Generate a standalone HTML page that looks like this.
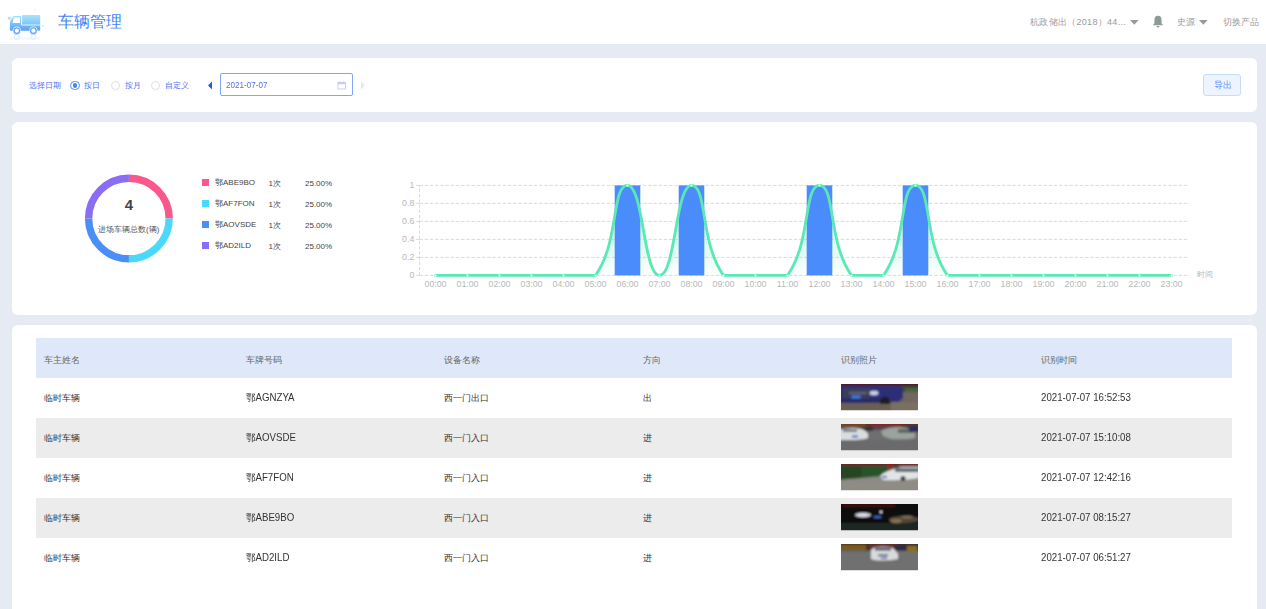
<!DOCTYPE html>
<html><head><meta charset="utf-8">
<style>
*{margin:0;padding:0;box-sizing:border-box}
html,body{width:1266px;height:609px;overflow:hidden;background:#e6ebf3;font-family:"Liberation Sans",sans-serif}
.abs{position:absolute}
#top{position:absolute;left:0;top:0;width:1266px;height:44px;background:#fff}
.card{position:absolute;left:12px;width:1245px;background:#fff;border-radius:6px}
#c1{top:58px;height:54px}
#c2{top:122px;height:193px}
#c3{top:325px;height:300px}
.t{position:absolute;white-space:nowrap;line-height:1}
.th{font-size:9.2px;color:#666}
.td{font-size:9.2px;color:#333}
.tn{font-size:10.2px;color:#333;transform:scaleX(0.95);transform-origin:0 0}
</style></head><body>
<div id="top">
  <svg class="abs" style="left:0;top:0" width="50" height="44" viewBox="0 0 50 44">
  <defs>
   <linearGradient id="tg" x1="0" y1="0" x2="0" y2="1"><stop offset="0" stop-color="#a6e3fb"/><stop offset="1" stop-color="#58a0f6"/></linearGradient>
   <linearGradient id="tg2" x1="0" y1="0" x2="0" y2="1"><stop offset="0" stop-color="#a9e4fb"/><stop offset="1" stop-color="#7cc3f8"/></linearGradient>
   <linearGradient id="rf" x1="0" y1="0" x2="0" y2="1"><stop offset="0" stop-color="#cfe3fb"/><stop offset="1" stop-color="#ffffff"/></linearGradient>
  </defs>
  <rect x="22.1" y="15" width="18.1" height="9.8" rx="0.6" fill="url(#tg2)"/>
  <path d="M14.5 16 H21.2 V24.7 H40.2 V29.6 Q40.2 30.8 39 30.8 H11 Q9.9 30.8 9.9 29.6 V22.5 Q10.2 20.5 12 18 Q13.2 16 14.5 16Z" fill="url(#tg)"/>
  <path d="M21.6 15.6 V25.1 H40.2" fill="none" stroke="#eaf6fe" stroke-width="0.8"/>
  <path d="M14.2 17.6 H19.9 V22.9 H12.6 Q12.9 20 14.2 17.6Z" fill="#fff"/>
  <circle cx="16.8" cy="30.7" r="3.9" fill="#5fa3f6" stroke="#fff" stroke-width="0.7"/><circle cx="16.8" cy="30.7" r="2.1" fill="#fff"/>
  <circle cx="33.4" cy="30.7" r="3.9" fill="#5fa3f6" stroke="#fff" stroke-width="0.7"/><circle cx="33.4" cy="30.7" r="2.1" fill="#fff"/>
  <g opacity="0.35"><rect x="10" y="37.5" width="30" height="3.5" fill="url(#rf)"/><circle cx="16.8" cy="37" r="2.5" fill="none" stroke="#9cc6f7" stroke-width="1"/><circle cx="33.4" cy="37" r="2.5" fill="none" stroke="#9cc6f7" stroke-width="1"/></g>
  <circle cx="9.3" cy="18.2" r="1.6" fill="#b9dcfa"/>
  <circle cx="35.2" cy="9.8" r="0.6" fill="#b9dcfa"/>
  <circle cx="42.9" cy="25.9" r="0.8" fill="#b9dcfa"/>
</svg>
  <div class="t" style="left:58px;top:14px;font-size:15.5px;color:#3f85f2">车辆管理</div>
  <div class="t" style="left:1030px;top:18px;font-size:9px;color:#999;letter-spacing:0.3px">杭政储出（2018）44...</div>
  <div class="t" style="left:1177px;top:18px;font-size:9px;color:#999">史源</div>
  <svg class="abs" style="left:1129.5px;top:19.5px" width="9" height="5"><path d="M0 0H8.6L4.3 4.8Z" fill="#999"/></svg>
  <svg class="abs" style="left:1152px;top:15px" width="12" height="13" viewBox="0 0 12 13"><path d="M6 0.8 C8.5 0.8 9.6 2.8 9.6 5.2 V8.4 L11.2 10.3 H0.8 L2.4 8.4 V5.2 C2.4 2.8 3.5 0.8 6 0.8Z" fill="#8e9a96"/><path d="M4.4 11 H7.6 Q7.2 12.6 6 12.6 Q4.8 12.6 4.4 11Z" fill="#8e9a96"/></svg>
  <svg class="abs" style="left:1198.5px;top:19.5px" width="9" height="5"><path d="M0 0H8.6L4.3 4.8Z" fill="#999"/></svg>
  <div class="t" style="left:1223px;top:18px;font-size:9px;color:#999">切换产品</div>
</div>
<div class="card" id="c1">
  <div class="t" style="left:17px;top:24px;font-size:8px;color:#4d72f3">选择日期</div>
  <div class="abs" style="left:58px;top:22.5px;width:9.5px;height:9.5px;border-radius:50%;border:1px solid #4e8df5"><div class="abs" style="left:1.5px;top:1.5px;width:4.5px;height:4.5px;border-radius:50%;background:#3d86f3"></div></div>
  <div class="t" style="left:72px;top:24px;font-size:8px;color:#4d72f3">按日</div>
  <div class="abs" style="left:98.7px;top:22.5px;width:9.5px;height:9.5px;border-radius:50%;border:1px solid #dcdfe6"></div>
  <div class="t" style="left:112.5px;top:24px;font-size:8px;color:#4d72f3">按月</div>
  <div class="abs" style="left:138.8px;top:22.5px;width:9.5px;height:9.5px;border-radius:50%;border:1px solid #dcdfe6"></div>
  <div class="t" style="left:153px;top:24px;font-size:8px;color:#4d72f3">自定义</div>
  <svg class="abs" style="left:195px;top:23px" width="6" height="9"><path d="M5 0.5 L1 4.5 L5 8.5Z" fill="#1a5cf0"/></svg>
  <div class="abs" style="left:208px;top:15.2px;width:133px;height:23px;border:1.2px solid #80a6f8;border-radius:2px"></div>
  <div class="t" style="left:213.5px;top:22.8px;font-size:9.3px;color:#4d72f3;transform:scaleX(0.87);transform-origin:0 0">2021-07-07</div>
  <svg class="abs" style="left:325px;top:22.5px" width="10" height="10"><rect x="0.9" y="1.4" width="7.6" height="6.6" fill="none" stroke="#c5c8f3" stroke-width="0.9"/><line x1="0.9" y1="2.6" x2="8.5" y2="2.6" stroke="#c5c8f3" stroke-width="1.3"/><line x1="3" y1="0.4" x2="3" y2="1.8" stroke="#c5c8f3" stroke-width="0.9"/><line x1="6.5" y1="0.4" x2="6.5" y2="1.8" stroke="#c5c8f3" stroke-width="0.9"/></svg>
  <svg class="abs" style="left:348px;top:23px" width="6" height="9"><path d="M1 0.5 L5 4.5 L1 8.5Z" fill="#e8e8e8"/></svg>
  <div class="abs" style="left:1191px;top:16px;width:38px;height:22px;border:1px solid #c6dcfb;background:#edf4ff;border-radius:3px"></div>
  <div class="t" style="left:1202px;top:23px;font-size:8.5px;color:#5b8ff5">导出</div>
</div>
<div class="card" id="c2"></div>
<svg class="abs" style="left:0;top:0" width="400" height="320"><path d="M128.90 178.20 A40.3 40.3 0 0 1 169.20 218.50" fill="none" stroke="#fa588c" stroke-width="7.4"/><path d="M169.20 218.50 A40.3 40.3 0 0 1 128.90 258.80" fill="none" stroke="#48d9fc" stroke-width="7.4"/><path d="M128.90 258.80 A40.3 40.3 0 0 1 88.60 218.50" fill="none" stroke="#4a8ef7" stroke-width="7.4"/><path d="M88.60 218.50 A40.3 40.3 0 0 1 128.90 178.20" fill="none" stroke="#8a6cf5" stroke-width="7.4"/></svg>
<div class="t" style="left:118.9px;top:197px;width:20px;text-align:center;font-size:15px;font-weight:bold;color:#454545">4</div>
<div class="t" style="left:98px;top:226px;font-size:8px;color:#555">进场车辆总数(辆)</div>
<div class="abs" style="left:201.7px;top:179.0px;width:7px;height:7px;background:#fa588c"></div><div class="t" style="left:215px;top:179.0px;font-size:8px;color:#444">鄂ABE9BO</div><div class="t" style="left:268.5px;top:180.0px;font-size:8px;color:#444">1次</div><div class="t" style="left:305px;top:180.0px;font-size:8px;color:#444">25.00%</div>
<div class="abs" style="left:201.7px;top:200.1px;width:7px;height:7px;background:#48d9fc"></div><div class="t" style="left:215px;top:200.1px;font-size:8px;color:#444">鄂AF7FON</div><div class="t" style="left:268.5px;top:201.1px;font-size:8px;color:#444">1次</div><div class="t" style="left:305px;top:201.1px;font-size:8px;color:#444">25.00%</div>
<div class="abs" style="left:201.7px;top:221.2px;width:7px;height:7px;background:#4a8ef7"></div><div class="t" style="left:215px;top:221.2px;font-size:8px;color:#444">鄂AOVSDE</div><div class="t" style="left:268.5px;top:222.2px;font-size:8px;color:#444">1次</div><div class="t" style="left:305px;top:222.2px;font-size:8px;color:#444">25.00%</div>
<div class="abs" style="left:201.7px;top:242.3px;width:7px;height:7px;background:#8a6cf5"></div><div class="t" style="left:215px;top:242.3px;font-size:8px;color:#444">鄂AD2ILD</div><div class="t" style="left:268.5px;top:243.3px;font-size:8px;color:#444">1次</div><div class="t" style="left:305px;top:243.3px;font-size:8px;color:#444">25.00%</div>
<svg class="abs" style="left:0;top:122px;font-family:'Liberation Sans',sans-serif" width="1266" height="320" viewBox="0 122 1266 320">
<defs><linearGradient id="ag" x1="0" y1="0" x2="0" y2="1"><stop offset="0" stop-color="#5fe8b8" stop-opacity="0.6"/><stop offset="1" stop-color="#5fe8b8" stop-opacity="0.02"/></linearGradient></defs>
<line x1="419.5" y1="257.40" x2="1187.7" y2="257.40" stroke="#d6d6d6" stroke-width="0.9" stroke-dasharray="3.4 1.8"/>
<line x1="419.5" y1="239.40" x2="1187.7" y2="239.40" stroke="#d6d6d6" stroke-width="0.9" stroke-dasharray="3.4 1.8"/>
<line x1="419.5" y1="221.40" x2="1187.7" y2="221.40" stroke="#d6d6d6" stroke-width="0.9" stroke-dasharray="3.4 1.8"/>
<line x1="419.5" y1="203.40" x2="1187.7" y2="203.40" stroke="#d6d6d6" stroke-width="0.9" stroke-dasharray="3.4 1.8"/>
<line x1="419.5" y1="185.40" x2="1187.7" y2="185.40" stroke="#d6d6d6" stroke-width="0.9" stroke-dasharray="3.4 1.8"/>
<line x1="419.5" y1="275.4" x2="1187.7" y2="275.4" stroke="#d6d6d6" stroke-width="0.9" stroke-dasharray="3.4 1.8"/>
<line x1="419.5" y1="275.4" x2="419.5" y2="185.4" stroke="#d6d6d6" stroke-width="0.9" stroke-dasharray="3.4 1.8"/>
<line x1="416.0" y1="275.40" x2="419.5" y2="275.40" stroke="#d6d6d6" stroke-width="0.9"/>
<text x="414.3" y="278.30" text-anchor="end" font-size="8.8" fill="#b8b8b8">0</text>
<line x1="416.0" y1="257.40" x2="419.5" y2="257.40" stroke="#d6d6d6" stroke-width="0.9"/>
<text x="414.3" y="260.30" text-anchor="end" font-size="8.8" fill="#b8b8b8">0.2</text>
<line x1="416.0" y1="239.40" x2="419.5" y2="239.40" stroke="#d6d6d6" stroke-width="0.9"/>
<text x="414.3" y="242.30" text-anchor="end" font-size="8.8" fill="#b8b8b8">0.4</text>
<line x1="416.0" y1="221.40" x2="419.5" y2="221.40" stroke="#d6d6d6" stroke-width="0.9"/>
<text x="414.3" y="224.30" text-anchor="end" font-size="8.8" fill="#b8b8b8">0.6</text>
<line x1="416.0" y1="203.40" x2="419.5" y2="203.40" stroke="#d6d6d6" stroke-width="0.9"/>
<text x="414.3" y="206.30" text-anchor="end" font-size="8.8" fill="#b8b8b8">0.8</text>
<line x1="416.0" y1="185.40" x2="419.5" y2="185.40" stroke="#d6d6d6" stroke-width="0.9"/>
<text x="414.3" y="188.30" text-anchor="end" font-size="8.8" fill="#b8b8b8">1</text>
<path d="M435.50 275.40 C435.50 275.40 451.50 275.40 467.50 275.40 C483.50 275.40 483.50 275.40 499.50 275.40 C515.50 275.40 515.50 275.40 531.50 275.40 C547.50 275.40 547.50 275.40 563.50 275.40 C579.50 275.40 587.47 275.40 595.50 275.40 C619.47 241.69 611.50 185.40 627.50 185.40 C643.50 185.40 643.50 275.40 659.50 275.40 C675.50 275.40 675.50 185.40 691.50 185.40 C707.50 185.40 699.53 241.69 723.50 275.40 C731.53 275.40 739.50 275.40 755.50 275.40 C771.50 275.40 779.47 275.40 787.50 275.40 C811.47 241.69 803.50 185.40 819.50 185.40 C835.50 185.40 827.53 241.69 851.50 275.40 C859.53 275.40 875.47 275.40 883.50 275.40 C907.47 241.69 899.50 185.40 915.50 185.40 C931.50 185.40 923.53 241.69 947.50 275.40 C955.53 275.40 963.50 275.40 979.50 275.40 C995.50 275.40 995.50 275.40 1011.50 275.40 C1027.50 275.40 1027.50 275.40 1043.50 275.40 C1059.50 275.40 1059.50 275.40 1075.50 275.40 C1091.50 275.40 1091.50 275.40 1107.50 275.40 C1123.50 275.40 1123.50 275.40 1139.50 275.40 C1155.50 275.40 1171.50 275.40 1171.50 275.40 L1171.50 275.4 L435.50 275.4 Z" fill="url(#ag)"/>
<rect x="614.70" y="185.4" width="25.6" height="90.00" fill="#4a8cfc"/>
<rect x="678.70" y="185.4" width="25.6" height="90.00" fill="#4a8cfc"/>
<rect x="806.70" y="185.4" width="25.6" height="90.00" fill="#4a8cfc"/>
<rect x="902.70" y="185.4" width="25.6" height="90.00" fill="#4a8cfc"/>
<path d="M435.50 275.40 C435.50 275.40 451.50 275.40 467.50 275.40 C483.50 275.40 483.50 275.40 499.50 275.40 C515.50 275.40 515.50 275.40 531.50 275.40 C547.50 275.40 547.50 275.40 563.50 275.40 C579.50 275.40 587.47 275.40 595.50 275.40 C619.47 241.69 611.50 185.40 627.50 185.40 C643.50 185.40 643.50 275.40 659.50 275.40 C675.50 275.40 675.50 185.40 691.50 185.40 C707.50 185.40 699.53 241.69 723.50 275.40 C731.53 275.40 739.50 275.40 755.50 275.40 C771.50 275.40 779.47 275.40 787.50 275.40 C811.47 241.69 803.50 185.40 819.50 185.40 C835.50 185.40 827.53 241.69 851.50 275.40 C859.53 275.40 875.47 275.40 883.50 275.40 C907.47 241.69 899.50 185.40 915.50 185.40 C931.50 185.40 923.53 241.69 947.50 275.40 C955.53 275.40 963.50 275.40 979.50 275.40 C995.50 275.40 995.50 275.40 1011.50 275.40 C1027.50 275.40 1027.50 275.40 1043.50 275.40 C1059.50 275.40 1059.50 275.40 1075.50 275.40 C1091.50 275.40 1091.50 275.40 1107.50 275.40 C1123.50 275.40 1123.50 275.40 1139.50 275.40 C1155.50 275.40 1171.50 275.40 1171.50 275.40" fill="none" stroke="#58e9b5" stroke-width="2.8" stroke-linejoin="round" stroke-linecap="round"/>
<circle cx="435.50" cy="275.40" r="1" fill="#fff"/>
<circle cx="467.50" cy="275.40" r="1" fill="#fff"/>
<circle cx="499.50" cy="275.40" r="1" fill="#fff"/>
<circle cx="531.50" cy="275.40" r="1" fill="#fff"/>
<circle cx="563.50" cy="275.40" r="1" fill="#fff"/>
<circle cx="595.50" cy="275.40" r="1" fill="#fff"/>
<circle cx="627.50" cy="185.40" r="1" fill="#fff"/>
<circle cx="659.50" cy="275.40" r="1" fill="#fff"/>
<circle cx="691.50" cy="185.40" r="1" fill="#fff"/>
<circle cx="723.50" cy="275.40" r="1" fill="#fff"/>
<circle cx="755.50" cy="275.40" r="1" fill="#fff"/>
<circle cx="787.50" cy="275.40" r="1" fill="#fff"/>
<circle cx="819.50" cy="185.40" r="1" fill="#fff"/>
<circle cx="851.50" cy="275.40" r="1" fill="#fff"/>
<circle cx="883.50" cy="275.40" r="1" fill="#fff"/>
<circle cx="915.50" cy="185.40" r="1" fill="#fff"/>
<circle cx="947.50" cy="275.40" r="1" fill="#fff"/>
<circle cx="979.50" cy="275.40" r="1" fill="#fff"/>
<circle cx="1011.50" cy="275.40" r="1" fill="#fff"/>
<circle cx="1043.50" cy="275.40" r="1" fill="#fff"/>
<circle cx="1075.50" cy="275.40" r="1" fill="#fff"/>
<circle cx="1107.50" cy="275.40" r="1" fill="#fff"/>
<circle cx="1139.50" cy="275.40" r="1" fill="#fff"/>
<circle cx="1171.50" cy="275.40" r="1" fill="#fff"/>
<text x="435.50" y="287" text-anchor="middle" font-size="8.8" fill="#b8b8b8">00:00</text>
<text x="467.50" y="287" text-anchor="middle" font-size="8.8" fill="#b8b8b8">01:00</text>
<text x="499.50" y="287" text-anchor="middle" font-size="8.8" fill="#b8b8b8">02:00</text>
<text x="531.50" y="287" text-anchor="middle" font-size="8.8" fill="#b8b8b8">03:00</text>
<text x="563.50" y="287" text-anchor="middle" font-size="8.8" fill="#b8b8b8">04:00</text>
<text x="595.50" y="287" text-anchor="middle" font-size="8.8" fill="#b8b8b8">05:00</text>
<text x="627.50" y="287" text-anchor="middle" font-size="8.8" fill="#b8b8b8">06:00</text>
<text x="659.50" y="287" text-anchor="middle" font-size="8.8" fill="#b8b8b8">07:00</text>
<text x="691.50" y="287" text-anchor="middle" font-size="8.8" fill="#b8b8b8">08:00</text>
<text x="723.50" y="287" text-anchor="middle" font-size="8.8" fill="#b8b8b8">09:00</text>
<text x="755.50" y="287" text-anchor="middle" font-size="8.8" fill="#b8b8b8">10:00</text>
<text x="787.50" y="287" text-anchor="middle" font-size="8.8" fill="#b8b8b8">11:00</text>
<text x="819.50" y="287" text-anchor="middle" font-size="8.8" fill="#b8b8b8">12:00</text>
<text x="851.50" y="287" text-anchor="middle" font-size="8.8" fill="#b8b8b8">13:00</text>
<text x="883.50" y="287" text-anchor="middle" font-size="8.8" fill="#b8b8b8">14:00</text>
<text x="915.50" y="287" text-anchor="middle" font-size="8.8" fill="#b8b8b8">15:00</text>
<text x="947.50" y="287" text-anchor="middle" font-size="8.8" fill="#b8b8b8">16:00</text>
<text x="979.50" y="287" text-anchor="middle" font-size="8.8" fill="#b8b8b8">17:00</text>
<text x="1011.50" y="287" text-anchor="middle" font-size="8.8" fill="#b8b8b8">18:00</text>
<text x="1043.50" y="287" text-anchor="middle" font-size="8.8" fill="#b8b8b8">19:00</text>
<text x="1075.50" y="287" text-anchor="middle" font-size="8.8" fill="#b8b8b8">20:00</text>
<text x="1107.50" y="287" text-anchor="middle" font-size="8.8" fill="#b8b8b8">21:00</text>
<text x="1139.50" y="287" text-anchor="middle" font-size="8.8" fill="#b8b8b8">22:00</text>
<text x="1171.50" y="287" text-anchor="middle" font-size="8.8" fill="#b8b8b8">23:00</text>
<text x="1196.5" y="277" font-size="8.4" fill="#b8b8b8">时间</text>
</svg>
<div class="card" id="c3"></div>
<!--TABLE-->
<div class="abs" style="left:36px;top:338px;width:1196px;height:39.5px;background:#dfe8f9"></div>
<div class="abs" style="left:36px;top:377.5px;width:1196px;height:40px;background:#fff"></div>
<div class="abs" style="left:36px;top:417.5px;width:1196px;height:40px;background:#ececec"></div>
<div class="abs" style="left:36px;top:457.5px;width:1196px;height:40px;background:#fff"></div>
<div class="abs" style="left:36px;top:497.5px;width:1196px;height:40px;background:#ececec"></div>
<div class="abs" style="left:36px;top:537.5px;width:1196px;height:40px;background:#fff"></div>
<div class="t th" style="left:44px;top:355.5px">车主姓名</div>
<div class="t th" style="left:246px;top:355.5px">车牌号码</div>
<div class="t th" style="left:444.4px;top:355.5px">设备名称</div>
<div class="t th" style="left:642.7px;top:355.5px">方向</div>
<div class="t th" style="left:841px;top:355.5px">识别照片</div>
<div class="t th" style="left:1040.7px;top:355.5px">识别时间</div>
<div class="t td" style="left:44px;top:393.8px">临时车辆</div>
<div class="t tn" style="left:246px;top:392.9px">鄂AGNZYA</div>
<div class="t td" style="left:444.4px;top:393.8px">西一门出口</div>
<div class="t td" style="left:642.7px;top:393.8px">出</div>
<svg class="abs" style="left:841.25px;top:384.40px" width="77" height="26.3" viewBox="0 0 77 26.3"><defs><filter id="pb0" x="-5%" y="-5%" width="110%" height="110%"><feGaussianBlur stdDeviation="0.8"/></filter><clipPath id="pc0"><rect width="77" height="26.3"/></clipPath></defs><g clip-path="url(#pc0)"><g filter="url(#pb0)"><rect x="-2" y="-2" width="81" height="30.3" fill="#6c6358"/>
<rect x="-2" y="-2" width="81" height="3.8" fill="#4a1820"/>
<rect x="56" y="1.8" width="22" height="6.5" fill="#3d473a"/>
<rect x="56" y="8" width="22" height="12" fill="#6e675e"/>
<rect x="64" y="4.5" width="13" height="3" fill="#4f6a40"/>
<path d="M-2 1.8 H60 L62 6 V14 L57 19 H-2 Z" fill="#2d2f78"/>
<rect x="2" y="4" width="27" height="10" fill="#3b3d58"/>
<rect x="8" y="8.5" width="18" height="1" fill="#8a8c9c"/>
<rect x="10.5" y="11.5" width="9" height="3" fill="#3f7be8"/>
<ellipse cx="33" cy="9" rx="4.5" ry="2.3" fill="#c9cfe2"/>
<rect x="-2" y="15" width="47" height="3" fill="#262a5e"/>
<ellipse cx="44" cy="18" rx="5" ry="5.5" fill="#1c1c24"/>
<rect x="-2" y="20" width="81" height="8" fill="#6a5f52"/>
<rect x="50" y="18" width="28" height="10" fill="#7a6f62"/></g></g></svg>
<div class="t tn" style="left:1040.7px;top:392.9px">2021-07-07 16:52:53</div>
<div class="t td" style="left:44px;top:433.8px">临时车辆</div>
<div class="t tn" style="left:246px;top:432.9px">鄂AOVSDE</div>
<div class="t td" style="left:444.4px;top:433.8px">西一门入口</div>
<div class="t td" style="left:642.7px;top:433.8px">进</div>
<svg class="abs" style="left:841.25px;top:424.40px" width="77" height="26.3" viewBox="0 0 77 26.3"><defs><filter id="pb1" x="-5%" y="-5%" width="110%" height="110%"><feGaussianBlur stdDeviation="0.8"/></filter><clipPath id="pc1"><rect width="77" height="26.3"/></clipPath></defs><g clip-path="url(#pc1)"><g filter="url(#pb1)"><rect x="-2" y="-2" width="81" height="30.3" fill="#6f6e70"/>
<rect x="-2" y="-2" width="81" height="5.5" fill="#5a3526"/>
<rect x="0" y="0" width="25" height="3" fill="#7a4a1e"/>
<rect x="30" y="0" width="30" height="2.5" fill="#8a2535"/>
<rect x="-2" y="3" width="81" height="3" fill="#4a4a52"/>
<rect x="14" y="3" width="18" height="4" fill="#2f3038"/>
<path d="M-2 6 Q4 3.5 14 4 Q24 4 27 10 V14 Q22 16 8 16 H-2Z" fill="#d9dde0"/>
<rect x="2" y="5" width="14" height="3" fill="#7d8288"/>
<rect x="11" y="11.5" width="6" height="2" fill="#4167c6"/>
<path d="M40 7 Q46 3 58 3 Q70 3 74 10 V14 Q65 16 50 15 L42 12Z" fill="#9aa39c"/>
<rect x="57" y="5" width="15" height="4" fill="#5e665f"/>
<rect x="68" y="2" width="10" height="6" fill="#2a2f5a"/>
<rect x="-2" y="16" width="81" height="12" fill="#6b6a6c"/></g></g></svg>
<div class="t tn" style="left:1040.7px;top:432.9px">2021-07-07 15:10:08</div>
<div class="t td" style="left:44px;top:473.8px">临时车辆</div>
<div class="t tn" style="left:246px;top:472.9px">鄂AF7FON</div>
<div class="t td" style="left:444.4px;top:473.8px">西一门入口</div>
<div class="t td" style="left:642.7px;top:473.8px">进</div>
<svg class="abs" style="left:841.25px;top:464.40px" width="77" height="26.3" viewBox="0 0 77 26.3"><defs><filter id="pb2" x="-5%" y="-5%" width="110%" height="110%"><feGaussianBlur stdDeviation="0.8"/></filter><clipPath id="pc2"><rect width="77" height="26.3"/></clipPath></defs><g clip-path="url(#pc2)"><g filter="url(#pb2)"><rect x="-2" y="-2" width="81" height="30.3" fill="#8b8a86"/>
<rect x="-2" y="-2" width="81" height="3.8" fill="#6a1d22"/>
<path d="M-2 1.8 H58 V8 L42 12 L-2 16Z" fill="#2c5229"/>
<rect x="-2" y="2" width="22" height="12" fill="#254524"/>
<rect x="47" y="0" width="4" height="5" fill="#a01820"/>
<path d="M39 12 Q46 5 62 3.5 H78 V14 Q62 17 42 16Z" fill="#e3e4e6"/>
<rect x="54" y="4.5" width="24" height="3.5" fill="#58606a"/>
<rect x="41" y="12" width="5" height="2" fill="#4a63c8"/>
<circle cx="62" cy="14.5" r="2.5" fill="#3a3a3e"/>
<rect x="-2" y="17" width="81" height="11" fill="#8f8c86"/></g></g></svg>
<div class="t tn" style="left:1040.7px;top:472.9px">2021-07-07 12:42:16</div>
<div class="t td" style="left:44px;top:513.8px">临时车辆</div>
<div class="t tn" style="left:246px;top:512.9px">鄂ABE9BO</div>
<div class="t td" style="left:444.4px;top:513.8px">西一门入口</div>
<div class="t td" style="left:642.7px;top:513.8px">进</div>
<svg class="abs" style="left:841.25px;top:504.40px" width="77" height="26.3" viewBox="0 0 77 26.3"><defs><filter id="pb3" x="-5%" y="-5%" width="110%" height="110%"><feGaussianBlur stdDeviation="0.8"/></filter><clipPath id="pc3"><rect width="77" height="26.3"/></clipPath></defs><g clip-path="url(#pc3)"><g filter="url(#pb3)"><rect x="-2" y="-2" width="81" height="30.3" fill="#0a0b0c"/>
<rect x="2" y="1" width="52" height="1.5" fill="#5a0b10"/>
<ellipse cx="22" cy="11" rx="8" ry="2.2" fill="#d8dbe8"/>
<rect x="33" y="12" width="7" height="2" fill="#3d64c8"/>
<circle cx="40" cy="8" r="1.3" fill="#e8e8f0"/>
<ellipse cx="63" cy="15.5" rx="15" ry="3.5" fill="#54463a"/>
<ellipse cx="55" cy="17" rx="6" ry="2" fill="#8a7256"/>
<ellipse cx="66" cy="13" rx="6" ry="1.5" fill="#7e6e55"/>
<rect x="-2" y="19" width="81" height="9" fill="#1d2524"/></g></g></svg>
<div class="t tn" style="left:1040.7px;top:512.9px">2021-07-07 08:15:27</div>
<div class="t td" style="left:44px;top:553.8px">临时车辆</div>
<div class="t tn" style="left:246px;top:552.9px">鄂AD2ILD</div>
<div class="t td" style="left:444.4px;top:553.8px">西一门入口</div>
<div class="t td" style="left:642.7px;top:553.8px">进</div>
<svg class="abs" style="left:841.25px;top:544.40px" width="77" height="26.3" viewBox="0 0 77 26.3"><defs><filter id="pb4" x="-5%" y="-5%" width="110%" height="110%"><feGaussianBlur stdDeviation="0.8"/></filter><clipPath id="pc4"><rect width="77" height="26.3"/></clipPath></defs><g clip-path="url(#pc4)"><g filter="url(#pb4)"><rect x="-2" y="-2" width="81" height="30.3" fill="#706f70"/>
<rect x="-2" y="-2" width="81" height="8.5" fill="#3c3328"/>
<rect x="-2" y="1" width="27" height="5" fill="#7d5a1e"/>
<rect x="28" y="0.5" width="30" height="2.5" fill="#7a2a30"/>
<rect x="53" y="1.5" width="25" height="5" fill="#2a2a48"/>
<rect x="66" y="2" width="10" height="6" fill="#8a6e1e"/>
<path d="M30 6 Q32 2.5 42 2.5 Q52 2.5 54 6 L57 10 V15 Q50 16.5 42 16.5 Q34 16.5 30 15 V10Z" fill="#d8dadd"/>
<rect x="34" y="3.5" width="16" height="3" fill="#4d5866"/>
<rect x="37" y="10" width="10" height="2.5" fill="#7a7d85"/>
<rect x="40" y="13.5" width="6" height="1.5" fill="#4a63c8"/></g></g></svg>
<div class="t tn" style="left:1040.7px;top:552.9px">2021-07-07 06:51:27</div>
<!--/TABLE-->
</body></html>
